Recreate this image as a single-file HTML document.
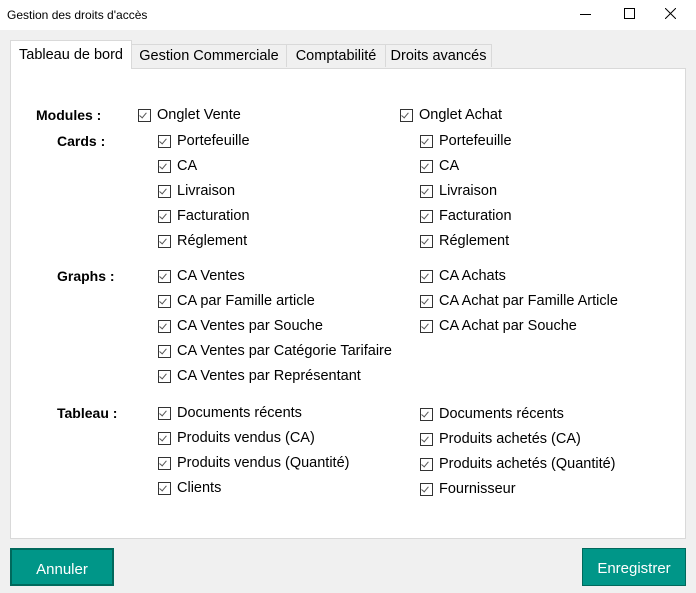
<!DOCTYPE html><html><head><style>
body{margin:0;width:696px;height:593px;background:#f0f0f0;font-family:"Liberation Sans",sans-serif;position:relative;overflow:hidden;color:#000}
.t{position:absolute;background:#fff;left:0;top:0;width:696px;height:30px}
.a{position:absolute;white-space:nowrap}
.tab{position:absolute;top:44px;height:23px;border:1px solid #d9d9d9;border-bottom:none;background:#f0f0f0;font-size:14.5px;line-height:23px;text-align:center;box-sizing:border-box}
.panel{position:absolute;left:10px;top:68px;width:676px;height:471px;background:#fff;border:1px solid #d9d9d9;box-sizing:border-box}
.c{position:absolute;font-size:14.5px;white-space:nowrap;line-height:16px}
.c:before{content:"";position:absolute;left:-19px;top:2px;width:11px;height:11px;border:1px solid #333;background:#fff}
.c:after{content:"";position:absolute;left:-16px;top:4px;width:3px;height:6px;border:solid #555;border-width:0 1.5px 1.5px 0;transform:rotate(40deg)}
.l{position:absolute;font-size:14px;font-weight:bold;line-height:16px}
.b{position:absolute;top:548px;height:38px;background:#009688;color:#fff;font-size:15px;line-height:40px;text-align:center;box-sizing:border-box;border:2px solid #00695c}
</style></head><body>
<div class="t"><div class="a" style="left:7px;top:8px;font-size:12px">Gestion des droits d'accès</div>
<div class="a" style="left:580px;top:14px;width:11px;height:1px;background:#000"></div>
<div class="a" style="left:624px;top:8px;width:9px;height:9px;border:1px solid #000"></div>
<svg class="a" style="left:665px;top:8px" width="11" height="11"><path d="M0 0L11 11M11 0L0 11" stroke="#000" stroke-width="1"/></svg></div>
<div class="tab" style="left:131px;width:156px">Gestion Commerciale</div>
<div class="tab" style="left:286px;width:100px">Comptabilité</div>
<div class="tab" style="left:385px;width:107px">Droits avancés</div>
<div class="panel"></div>
<div class="tab" style="left:10px;top:40px;width:122px;height:29px;background:#fff;line-height:28px">Tableau de bord</div>
<div class="l" style="left:36px;top:107px">Modules :</div>
<div class="l" style="left:57px;top:133px">Cards :</div>
<div class="l" style="left:57px;top:268px">Graphs :</div>
<div class="l" style="left:57px;top:405px">Tableau :</div>
<div class="c" style="left:157px;top:107px">Onglet Vente</div>
<div class="c" style="left:419px;top:107px">Onglet Achat</div>
<div class="c" style="left:177px;top:133px">Portefeuille</div>
<div class="c" style="left:177px;top:158px">CA</div>
<div class="c" style="left:177px;top:183px">Livraison</div>
<div class="c" style="left:177px;top:208px">Facturation</div>
<div class="c" style="left:177px;top:233px">Réglement</div>
<div class="c" style="left:439px;top:133px">Portefeuille</div>
<div class="c" style="left:439px;top:158px">CA</div>
<div class="c" style="left:439px;top:183px">Livraison</div>
<div class="c" style="left:439px;top:208px">Facturation</div>
<div class="c" style="left:439px;top:233px">Réglement</div>
<div class="c" style="left:177px;top:268px">CA Ventes</div>
<div class="c" style="left:177px;top:293px">CA par Famille article</div>
<div class="c" style="left:177px;top:318px">CA Ventes par Souche</div>
<div class="c" style="left:177px;top:343px">CA Ventes par Catégorie Tarifaire</div>
<div class="c" style="left:177px;top:368px">CA Ventes par Représentant</div>
<div class="c" style="left:439px;top:268px">CA Achats</div>
<div class="c" style="left:439px;top:293px">CA Achat par Famille Article</div>
<div class="c" style="left:439px;top:318px">CA Achat par Souche</div>
<div class="c" style="left:177px;top:405px">Documents récents</div>
<div class="c" style="left:177px;top:430px">Produits vendus (CA)</div>
<div class="c" style="left:177px;top:455px">Produits vendus (Quantité)</div>
<div class="c" style="left:177px;top:480px">Clients</div>
<div class="c" style="left:439px;top:406px">Documents récents</div>
<div class="c" style="left:439px;top:431px">Produits achetés (CA)</div>
<div class="c" style="left:439px;top:456px">Produits achetés (Quantité)</div>
<div class="c" style="left:439px;top:481px">Fournisseur</div>
<div class="b" style="left:10px;width:104px">Annuler</div>
<div class="b" style="left:582px;width:104px;border-width:1px">Enregistrer</div>
</body></html>
